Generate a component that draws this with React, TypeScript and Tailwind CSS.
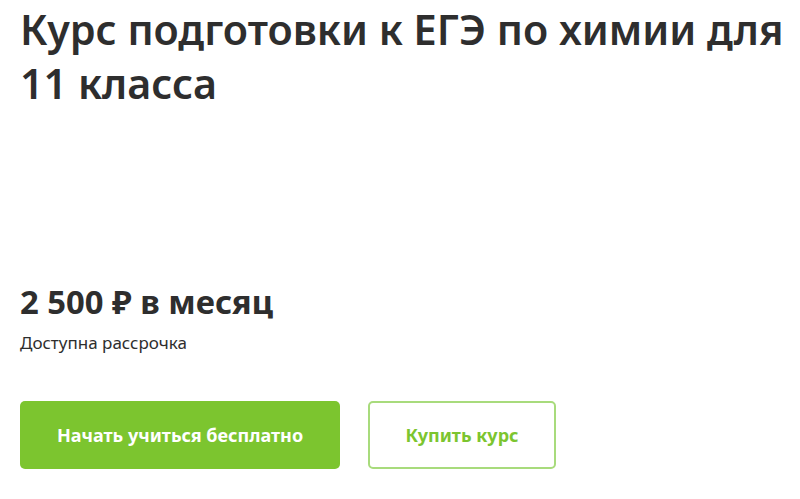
export default function App() {
  return (
    <div
      className="w-[800px] h-[499px] bg-white text-[#2e2e2e] px-5 overflow-hidden"
      style={{ fontFamily: '"Noto Sans", "Open Sans", Arial, sans-serif' }}
    >
      <h1 className="pt-[2px] text-[41.3px] leading-[54px] font-semibold whitespace-nowrap">
        Курс подготовки к ЕГЭ по химии для
        <br />
        11 класса
      </h1>

      <div className="mt-[172px]">
        <div className="text-[32.8px] leading-[40px] font-bold">2 500 ₽ в месяц</div>
        <div className="mt-[11px] text-[17px] leading-[20px]">Доступна рассрочка</div>
      </div>

      <div className="mt-[48px] flex gap-[28px]">
        <button className="w-[320px] h-[68px] rounded-[5px] bg-[#7cc52f] text-white text-[18px] font-bold">
          Начать учиться бесплатно
        </button>
        <button className="w-[188px] h-[68px] rounded-[5px] border-2 border-[#a8db7c] bg-white text-[#7cc52f] text-[18px] font-bold">
          Купить курс
        </button>
      </div>
    </div>
  );
}
